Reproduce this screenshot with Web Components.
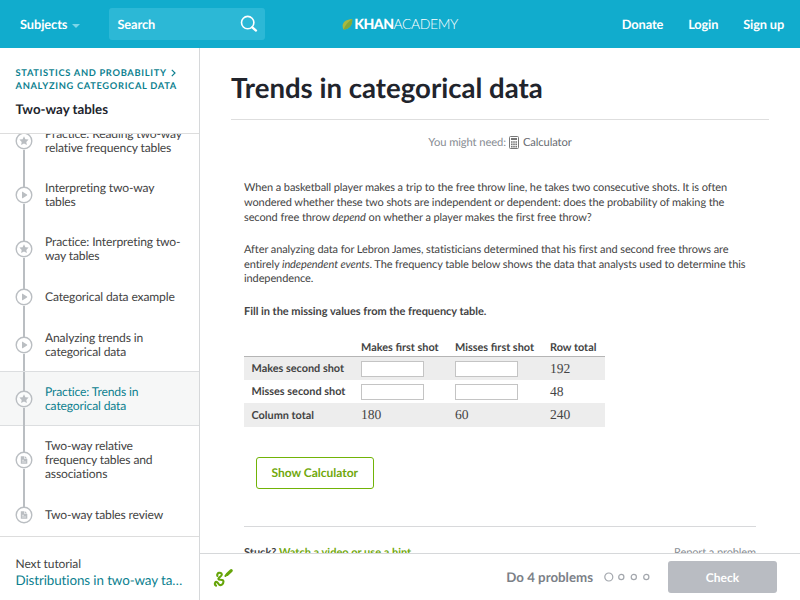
<!DOCTYPE html>
<html lang="en">
<head>
<meta charset="utf-8">
<title>Trends in categorical data</title>
<style>
  html, body { height: 100%; }
  body {
    margin: 0;
    overflow: hidden;
    background: #fff;
    color: #444;
    font-family: Lato, "Liberation Sans", sans-serif;
    font-size: 12px;
    text-rendering: geometricPrecision;
  }
  p b { letter-spacing: -.03px; }
</style>
</head>
<body>
<ka-app>
  <ka-topbar slot="top"></ka-topbar>
  <ka-sidebar slot="side" heading="Two-way tables" next="Distributions in two-way tables">
    <span slot="crumb">Statistics and probability</span>
    <span slot="crumb2">Analyzing categorical data</span>
    <ka-lesson kind="star">Practice: Reading two-way relative frequency tables</ka-lesson>
    <ka-lesson kind="play">Interpreting two-way tables</ka-lesson>
    <ka-lesson kind="star">Practice: Interpreting two-way tables</ka-lesson>
    <ka-lesson kind="play">Categorical data example</ka-lesson>
    <ka-lesson kind="play">Analyzing trends in categorical data</ka-lesson>
    <ka-lesson kind="star" selected>Practice: Trends in categorical data</ka-lesson>
    <ka-lesson kind="doc">Two-way relative frequency tables and associations</ka-lesson>
    <ka-lesson kind="doc" last>Two-way tables review</ka-lesson>
  </ka-sidebar>
  <ka-exercise slot="main" heading="Trends in categorical data">
    <p>When a basketball player makes a trip to the free throw line, he takes two consecutive shots. It is often<br>wondered whether these two shots are independent or dependent: does the probability of making the<br>second free throw <em>depend</em> on whether a player makes the first free throw?</p>
    <p>After analyzing data for Lebron James, statisticians determined that his first and second free throws are<br>entirely <em>independent events</em>. The frequency table below shows the data that analysts used to determine this<br>independence.</p>
    <p><b>Fill in the missing values from the frequency table.</b></p>
    <ka-table></ka-table>
  </ka-exercise>
  <ka-taskbar slot="task" total="4"></ka-taskbar>
</ka-app>

<script>
// Small helper: every element keeps its markup and styles in an open shadow root
class KaElement extends HTMLElement {
  constructor() {
    super();
    this.attachShadow({ mode: 'open' });
  }
  connectedCallback() {
    this.shadowRoot.innerHTML = this.render();
  }
}

class KaApp extends KaElement {
  render() {
    return `
      <style>
        :host { display: flex; flex-direction: column; height: 100vh; }
        .body { display: flex; flex: 1; min-height: 0; }
        .col { display: flex; flex-direction: column; flex: 1; min-width: 0; }
      </style>
      <slot name="top"></slot>
      <div class="body">
        <slot name="side"></slot>
        <div class="col">
          <slot name="main"></slot>
          <slot name="task"></slot>
        </div>
      </div>
    `;
  }
}

class KaTopbar extends KaElement {
  render() {
    return `
      <style>
        :host {
          display: grid;
          grid-template-columns: 1fr auto 1fr;
          align-items: center;
          flex: none;
          height: 48px;
          box-sizing: border-box;
          padding: 0 16px;
          background: #11accd;
          color: #fff;
          font-size: 12.8px;
          font-weight: 700;
          letter-spacing: -.08px;
        }
        .left { display: flex; align-items: center; gap: 29.5px; padding-left: 4px; }
        .subjects { display: flex; align-items: center; gap: 4.5px; }
        .caret {
          border: 4px solid transparent;
          border-top: 4.5px solid #7cd5e8;
          border-bottom: 0;
          margin-top: 3px;
        }
        .search {
          display: flex;
          align-items: center;
          justify-content: space-between;
          box-sizing: border-box;
          width: 156px;
          height: 32px;
          padding: 0 7px 0 8px;
          border-radius: 3px;
          background: #2cb8d6;
        }
        .logo { display: flex; align-items: center; gap: 1px; font-size: 14px; line-height: 16px; }
        .khan { font-weight: 900; letter-spacing: -.45px; }
        .academy { font-weight: 300; letter-spacing: -.45px; }
        .right { display: flex; justify-content: flex-end; gap: 25px; letter-spacing: -.15px; }
      </style>
      <div class="left">
        <span class="subjects">Subjects <i class="caret"></i></span>
        <div class="search">
          <span>Search</span>
          <svg width="18" height="18" viewBox="0 0 18 18" fill="none" stroke="#fff">
            <circle cx="7.7" cy="7.6" r="6.2" stroke-width="1.6"/>
            <path d="M12.3 12.3 L16 15.6" stroke-width="2.3" stroke-linecap="round"/>
          </svg>
        </div>
      </div>
      <div class="logo">
        <svg width="11" height="13" viewBox="0 0 11 13">
          <path d="M10.2 1 C4.5 1.3 .6 4 .6 8 C.6 9.4 1 10.6 1.6 11.6 C7.5 11.2 10.7 6.8 10.2 1 Z" fill="#a9b93f"/>
          <path d="M10.2 1 C6 3.5 3 7.5 1.6 11.6 C7.5 11.2 10.7 6.8 10.2 1 Z" fill="#83a83a"/>
        </svg>
        <span><span class="khan">KHAN</span><span class="academy">ACADEMY</span></span>
      </div>
      <div class="right"><span>Donate</span><span>Login</span><span>Sign up</span></div>
    `;
  }
}

class KaSidebar extends KaElement {
  render() {
    return `
      <style>
        :host {
          display: flex;
          flex-direction: column;
          flex: none;
          box-sizing: border-box;
          width: 200px;
          border-right: 1px solid #d6d8da;
        }
        header {
          flex: none;
          box-sizing: border-box;
          height: 86px;
          padding: 19px 0 0 15.5px;
          border-bottom: 1px solid #ddd;
        }
        .crumbs {
          color: #0c7f8f;
          font-size: 9.3px;
          font-weight: 700;
          line-height: 12.5px;
          letter-spacing: .68px;
          text-transform: uppercase;
          white-space: nowrap;
        }
        .crumbs div { display: flex; align-items: center; gap: 4.5px; }
        h2 { margin: 9px 0 0; color: #21242c; font-size: 13.3px; line-height: 16px; }
        /* the list is scrolled to its end */
        .list {
          display: flex;
          flex-direction: column;
          justify-content: flex-end;
          flex: 1;
          min-height: 0;
          overflow: hidden;
        }
        footer {
          flex: none;
          box-sizing: border-box;
          height: 64px;
          padding: 19px 15px 0 15.5px;
          border-top: 1px solid #ddd;
          line-height: 16px;
          letter-spacing: -.1px;
        }
        footer a {
          display: block;
          overflow: hidden;
          color: #0c7f8f;
          font-size: 13.4px;
          white-space: nowrap;
          text-overflow: ellipsis;
        }
      </style>
      <header>
        <div class="crumbs">
          <div><slot name="crumb"></slot>
            <svg width="5" height="8" viewBox="0 0 5 8" fill="none" stroke="#0c7f8f" stroke-width="1.2"><path d="M.8 .8 L4 4 L.8 7.2"/></svg>
          </div>
          <slot name="crumb2"></slot>
        </div>
        <h2>${this.getAttribute('heading')}</h2>
      </header>
      <div class="list"><slot></slot></div>
      <footer>Next tutorial<a>${this.getAttribute('next')}</a></footer>
    `;
  }
}

const LESSON_ICONS = {
  star: '<path d="M9 4.3 L10.4 7.2 L13.6 7.6 L11.3 9.9 L11.9 13.1 L9 11.6 L6.1 13.1 L6.7 9.9 L4.4 7.6 L7.6 7.2 Z"/>',
  play: '<path d="M7 6 Q7 5.4 7.6 5.7 L12 8.5 Q12.5 9 12 9.4 L7.6 12.2 Q7 12.5 7 12 Z"/>',
  doc: '<path d="M5.8 5.2 H9.4 V8 H12.3 V12.8 H5.8 Z M10 5.2 L12.3 7.4 H10 Z"/><path d="M7 9.3 H9 M7 11 H11" stroke="#fff" stroke-width=".6"/>'
};

class KaLesson extends KaElement {
  render() {
    return `
      <style>
        :host {
          display: flex;
          align-items: stretch;
          flex: none;
          box-sizing: border-box;
          min-height: 42px;
          padding-left: 15px;
          line-height: 14px;
        }
        :host([selected]) {
          background: #f6f7f7;
          color: #0c7f8f;
          box-shadow: 0 -1px #dcdee0, inset 0 -1px #dcdee0;
        }
        .rail { display: flex; flex-direction: column; align-items: center; width: 18px; }
        .rail i { flex: 1; width: 1.5px; background: #babec2; }
        :host([last]) .rail i:last-child { background: none; }
        .rail svg { flex: none; margin: -.5px 0; }
        .text {
          align-self: center;
          flex: 1;
          padding: 13px 14px 13px 12px;
          font-size: 12.1px;
          letter-spacing: -.15px;
        }
      </style>
      <div class="rail">
        <i></i>
        <svg width="18" height="18" viewBox="0 0 18 18" fill="#babec2">
          <circle cx="9" cy="9" r="7.8" fill="#fff" fill-opacity=".6" stroke="#babec2" stroke-width="1.4"/>
          ${LESSON_ICONS[this.getAttribute('kind')]}
        </svg>
        <i></i>
      </div>
      <div class="text"><slot></slot></div>
    `;
  }
}

class KaExercise extends KaElement {
  render() {
    return `
      <style>
        :host { display: block; flex: 1; min-height: 0; overflow: hidden; padding: 0 31px; }
        h1 {
          margin: 0;
          padding: 23px 0 14px;
          border-bottom: 1px solid #dedede;
          color: #21242c;
          font-size: 27.6px;
          line-height: 34px;
        }
        .need {
          display: flex;
          align-items: center;
          justify-content: center;
          gap: 3.5px;
          height: 16px;
          margin-top: 14px;
          font-size: 11.2px;
          letter-spacing: -.1px;
          color: #888d93;
        }
        .need b { color: #666b70; font-weight: 400; }
        .work {
          padding: 31px 13px 0;
          font-size: 11px;
          line-height: 14.8px;
          letter-spacing: -.1px;
          white-space: nowrap;
        }
        ::slotted(p) { margin: 0 0 17.5px; }
        button {
          display: block;
          box-sizing: border-box;
          width: 117.5px;
          height: 32px;
          margin: 30px 0 0 12px;
          padding: 0;
          border: 1px solid #71b307;
          border-radius: 3px;
          background: #fff;
          color: #71a80d;
          font: 700 12px Lato, sans-serif;
          text-rendering: inherit;
        }
        .help {
          display: flex;
          justify-content: space-between;
          margin-top: 37px;
          padding-top: 19px;
          border-top: 1px solid #d8d9db;
          color: #888d93;
        }
        .help b { color: #444; letter-spacing: 0; }
        .help a { color: #71a80d; }
      </style>
      <h1>${this.getAttribute('heading')}</h1>
      <div class="need">You might need:
        <svg width="10" height="13" viewBox="0 0 10 13">
          <rect x=".5" y=".5" width="9" height="12" rx="1" fill="#fff" stroke="#777"/>
          <rect x="2" y="2" width="6" height="2" fill="#777"/>
          <path d="M2 6 H8 M2 8.3 H8 M2 10.6 H8" stroke="#777" stroke-width="1.6" stroke-dasharray="1.6 .6"/>
        </svg>
        <b>Calculator</b>
      </div>
      <div class="work">
        <slot></slot>
        <button>Show Calculator</button>
        <div class="help"><b>Stuck? <a>Watch a video or use a hint.</a></b><span>Report a problem</span></div>
      </div>
    `;
  }
}

class KaTable extends KaElement {
  render() {
    const rows = [
      ['Makes second shot', null, null, 192],
      ['Misses second shot', null, null, 48],
      ['Column total', 180, 60, 240]
    ];
    const cell = (v) => `<td>${v === null ? '<input type="text">' : v}</td>`;
    return `
      <style>
        :host { display: block; margin-top: 18px; font-size: 10.9px; letter-spacing: 0; }
        table { width: 361px; table-layout: fixed; border-collapse: collapse; line-height: 14px; }
        th { padding: 2px 0 0 7.5px; font-weight: 700; text-align: left; }
        thead th { height: 17px; padding: 0 0 1px 7.5px; border-bottom: 1px solid #b5b5b5; vertical-align: bottom; }
        td { padding: 1px 0 0 7.5px; font: 13.6px/14px "Liberation Serif", serif; }
        tbody tr { height: 23.5px; }
        tbody tr:nth-child(odd) { background: #ededed; }
        input {
          display: block;
          box-sizing: border-box;
          width: 63px;
          height: 16px;
          padding: 0;
          border: 1px solid #c4c4c4;
          background: #fff;
        }
      </style>
      <table>
        <colgroup><col style="width:109.5px"><col style="width:94px"><col style="width:95px"><col></colgroup>
        <thead><tr><th></th><th>Makes first shot</th><th>Misses first shot</th><th>Row total</th></tr></thead>
        <tbody>${rows.map(([name, ...vals]) => `<tr><th>${name}</th>${vals.map(cell).join('')}</tr>`).join('')}</tbody>
      </table>
    `;
  }
}

class KaTaskbar extends KaElement {
  render() {
    const total = parseInt(this.getAttribute('total') ?? '4', 10);
    let dots = '';
    for (let i = 0; i < total; ++i) {
      dots += `<circle cx="${4.8 + i * 12.5}" cy="5" r="${i === 0 ? 4 : 2.6}"/>`;
    }
    return `
      <style>
        :host {
          display: flex;
          align-items: center;
          flex: none;
          box-sizing: border-box;
          height: 47px;
          padding: 0 23px 0 13px;
          border-top: 1px solid #d6d8da;
          background: #fff;
        }
        .goal { margin: 0 11px 0 auto; color: #7b8087; font-size: 13.3px; font-weight: 700; }
        button {
          width: 109px;
          height: 32px;
          margin-left: 18px;
          padding: 0;
          border: 0;
          border-radius: 3px;
          background: #b9bcc2;
          color: #fff;
          font: 700 12px Lato, sans-serif;
          text-rendering: inherit;
        }
      </style>
      <svg width="21" height="21" viewBox="0 0 21 21" fill="none" stroke="#66a50a" stroke-linecap="round" stroke-linejoin="round">
        <path d="M4.4 9 C3.2 5.6 8.2 4.6 8.8 7.4 C9.2 9.6 5 10 5.4 12 C5.8 13.6 10 11.6 10.4 14.2 C10.8 17.4 7.6 19 6 17.4 C4.8 16 3.4 13.6 2.2 15.6 C1.6 16.8 2 18 3 18.6" stroke-width="2.1"/>
        <path d="M14.2 7.4 L18.2 3.7" stroke-width="3.2"/>
        <path d="M12.4 9 L13.6 7.8" stroke-width="2"/>
      </svg>
      <span class="goal">Do ${total} problems</span>
      <svg width="46" height="10" viewBox="0 0 46 10" fill="none" stroke="#a3a7ad" stroke-width="1.2">${dots}</svg>
      <button>Check</button>
    `;
  }
}

customElements.define('ka-app', KaApp);
customElements.define('ka-topbar', KaTopbar);
customElements.define('ka-sidebar', KaSidebar);
customElements.define('ka-lesson', KaLesson);
customElements.define('ka-exercise', KaExercise);
customElements.define('ka-table', KaTable);
customElements.define('ka-taskbar', KaTaskbar);
</script>
</body>
</html>
